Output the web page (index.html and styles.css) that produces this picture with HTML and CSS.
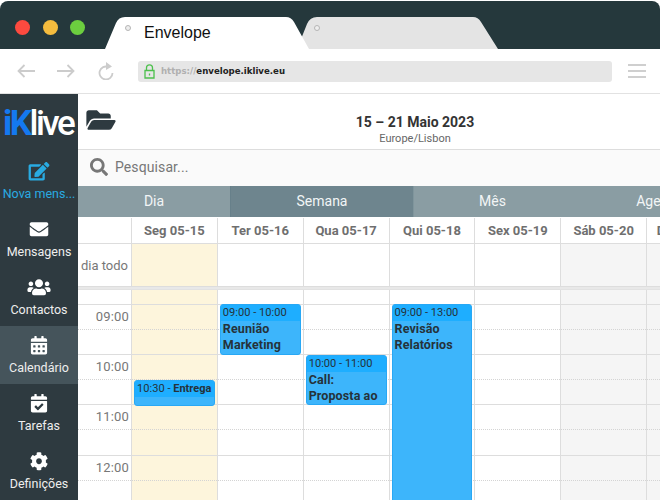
FILE: index.html
```html
<!DOCTYPE html>
<html lang="pt">
<head>
<meta charset="utf-8">
<title>Envelope</title>
<link rel="stylesheet" href="styles.css">
</head>
<body>
<div class="window">
  <header class="titlebar">
    <div class="lights"><span class="light red"></span><span class="light yellow"></span><span class="light green"></span></div>
    <div class="tabs-browser">
      <div class="btab active"><span class="bdot"></span><span>Envelope</span></div>
      <div class="btab idle"><span class="bdot"></span></div>
    </div>
  </header>
  <div class="toolbar">
    <svg class="nav-ic" viewBox="0 0 18 14"><path d="M18 7H1.500M7.500 1 1.500 7l6 6"/></svg>
    <svg class="nav-ic" viewBox="0 0 18 14"><path d="M0 7h16.500M10.500 1l6 6-6 6"/></svg>
    <svg class="reload-ic" viewBox="0 0 16 18"><path class="arc" d="M10.500 5A6.500 6.500 0 1 0 14.500 11"/><path class="head" d="M8 0l6 4.500L8 8z"/></svg>
    <div class="urlbar">
      <svg class="lock" viewBox="0 0 11 15"><path d="M2.500 6.500V3.800a3 3 0 0 1 6 0v2.700M1 6.500h9v7.500H1z"/><path d="M5.500 9.500v2"/></svg>
      <span class="url"><span class="scheme">https://</span>envelope.iklive.eu</span>
    </div>
    <div class="burger"><i></i><i></i><i></i></div>
  </div>
  <div class="app">
    <aside class="sidebar">
      <div class="logo"><span class="logo-a">iK</span><span class="logo-b">live</span></div>
      <nav class="menu">
        <a class="item new"><svg class="ic ic-edit" viewBox="0 0 576 512"><path d="M402.600 83.200l90.200 90.200c3.800 3.800 3.800 10 0 13.800L274.400 405.600l-92.800 10.300c-12.400 1.400-22.900-9.100-21.500-21.500l10.300-92.800L388.800 83.200c3.800-3.800 10-3.800 13.800 0zm162-22.900l-48.800-48.800c-15.200-15.200-39.900-15.200-55.200 0l-35.400 35.400c-3.800 3.800-3.800 10 0 13.800l90.200 90.200c3.800 3.800 10 3.800 13.800 0l35.400-35.400c15.200-15.300 15.200-40 0-55.200zM384 346.200V448H64V128h229.800c3.200 0 6.200-1.300 8.500-3.500l40-40c7.600-7.600 2.200-20.500-8.500-20.500H48C21.500 64 0 85.500 0 112v352c0 26.500 21.500 48 48 48h352c26.500 0 48-21.500 48-48V306.200c0-10.700-12.900-16-20.500-8.500l-40 40c-2.200 2.300-3.500 5.300-3.500 8.500z"/></svg><span>Nova mens...</span></a>
        <a class="item"><svg class="ic" viewBox="0 0 512 512"><path d="M502.300 190.800c3.900-3.100 9.700-.2 9.700 4.700V400c0 26.500-21.500 48-48 48H48c-26.500 0-48-21.500-48-48V195.600c0-5 5.700-7.800 9.700-4.700 22.400 17.400 52.100 39.500 154.100 113.600 21.100 15.400 56.700 47.800 92.200 47.600 35.700.3 72-32.800 92.300-47.600 102-74.100 131.600-96.300 154-113.700zM256 320c23.200.4 56.600-29.200 73.400-41.400 132.700-96.300 142.800-104.700 173.400-128.700 5.800-4.500 9.200-11.500 9.200-18.900v-19c0-26.500-21.500-48-48-48H48C21.500 64 0 85.500 0 112v19c0 7.400 3.400 14.300 9.200 18.900 30.600 23.900 40.700 32.400 173.400 128.700 16.800 12.200 50.200 41.800 73.400 41.400z"/></svg><span>Mensagens</span></a>
        <a class="item"><svg class="ic" viewBox="0 0 640 512"><path d="M96 224c35.300 0 64-28.700 64-64s-28.700-64-64-64-64 28.700-64 64 28.700 64 64 64zm448 0c35.300 0 64-28.700 64-64s-28.700-64-64-64-64 28.700-64 64 28.700 64 64 64zm32 32h-64c-17.600 0-33.500 7.100-45.100 18.600 40.300 22.100 68.900 62 75.100 109.400h66c17.700 0 32-14.300 32-32v-32c0-35.300-28.700-64-64-64zm-256 0c61.900 0 112-50.100 112-112S381.900 32 320 32 208 82.100 208 144s50.100 112 112 112zm76.800 32h-8.300c-20.800 10-43.900 16-68.500 16s-47.600-6-68.500-16h-8.300C179.600 288 128 339.600 128 403.200V432c0 26.500 21.500 48 48 48h288c26.500 0 48-21.500 48-48v-28.800c0-63.600-51.600-115.200-115.200-115.200zm-223.700-13.400C161.500 263.100 145.600 256 128 256H64c-35.300 0-64 28.700-64 64v32c0 17.700 14.300 32 32 32h65.900c6.300-47.400 34.900-87.300 75.200-109.400z"/></svg><span>Contactos</span></a>
        <a class="item current"><svg class="ic" viewBox="0 0 448 512"><path d="M0 464c0 26.500 21.500 48 48 48h352c26.500 0 48-21.500 48-48V192H0v272zm320-196c0-6.600 5.400-12 12-12h40c6.600 0 12 5.400 12 12v40c0 6.600-5.400 12-12 12h-40c-6.600 0-12-5.400-12-12v-40zm0 128c0-6.600 5.400-12 12-12h40c6.600 0 12 5.400 12 12v40c0 6.600-5.400 12-12 12h-40c-6.600 0-12-5.400-12-12v-40zM192 268c0-6.600 5.400-12 12-12h40c6.600 0 12 5.400 12 12v40c0 6.600-5.400 12-12 12h-40c-6.600 0-12-5.400-12-12v-40zm0 128c0-6.600 5.400-12 12-12h40c6.600 0 12 5.400 12 12v40c0 6.600-5.400 12-12 12h-40c-6.600 0-12-5.400-12-12v-40zM64 268c0-6.600 5.400-12 12-12h40c6.600 0 12 5.400 12 12v40c0 6.600-5.400 12-12 12H76c-6.600 0-12-5.400-12-12v-40zm0 128c0-6.600 5.400-12 12-12h40c6.600 0 12 5.400 12 12v40c0 6.600-5.400 12-12 12H76c-6.600 0-12-5.400-12-12v-40zM400 64h-48V16c0-8.800-7.200-16-16-16h-32c-8.800 0-16 7.200-16 16v48H160V16c0-8.800-7.200-16-16-16h-32c-8.800 0-16 7.200-16 16v48H48C21.500 64 0 85.500 0 112v48h448v-48c0-26.500-21.500-48-48-48z"/></svg><span>Calendário</span></a>
        <a class="item"><svg class="ic" viewBox="0 0 448 512"><path d="M436 160H12c-6.627 0-12-5.373-12-12v-36c0-26.510 21.490-48 48-48h48V12c0-6.627 5.373-12 12-12h40c6.627 0 12 5.373 12 12v52h128V12c0-6.627 5.373-12 12-12h40c6.627 0 12 5.373 12 12v52h48c26.510 0 48 21.490 48 48v36c0 6.627-5.373 12-12 12zM12 192h424c6.627 0 12 5.373 12 12v260c0 26.510-21.490 48-48 48H48c-26.510 0-48-21.490-48-48V204c0-6.627 5.373-12 12-12zm333.296 95.947l-28.169-28.398c-4.667-4.705-12.265-4.736-16.970-.068L194.120 364.665l-45.980-46.352c-4.667-4.705-12.266-4.736-16.971-.068l-28.397 28.170c-4.705 4.667-4.736 12.265-.068 16.970l82.601 83.269c4.667 4.705 12.265 4.736 16.970.068l142.953-141.805c4.705-4.667 4.736-12.265.068-16.970z"/></svg><span>Tarefas</span></a>
        <a class="item"><svg class="ic" viewBox="0 0 512 512"><path d="M487.400 315.700l-42.600-24.600c4.300-23.200 4.300-47 0-70.200l42.600-24.600c4.900-2.800 7.100-8.600 5.500-14-11.100-35.600-30-67.800-54.700-94.600-3.800-4.100-10-5.100-14.800-2.300L380.800 110c-17.900-15.400-38.500-27.300-60.800-35.100V25.800c0-5.600-3.900-10.500-9.400-11.700-36.700-8.200-74.300-7.800-109.200 0-5.500 1.200-9.400 6.100-9.400 11.700V75c-22.200 7.900-42.800 19.800-60.800 35.100L88.700 85.500c-4.900-2.800-11-1.900-14.800 2.300-24.700 26.700-43.600 58.900-54.700 94.600-1.700 5.400.6 11.200 5.500 14L67.300 221c-4.300 23.200-4.300 47 0 70.200l-42.600 24.600c-4.900 2.800-7.100 8.600-5.500 14 11.100 35.600 30 67.800 54.700 94.600 3.800 4.100 10 5.100 14.800 2.300l42.600-24.600c17.900 15.400 38.500 27.300 60.800 35.100v49.200c0 5.600 3.900 10.500 9.400 11.700 36.700 8.200 74.300 7.800 109.200 0 5.500-1.200 9.400-6.100 9.400-11.700v-49.200c22.200-7.900 42.800-19.800 60.800-35.100l42.600 24.600c4.900 2.800 11 1.900 14.800-2.300 24.700-26.700 43.600-58.900 54.700-94.600 1.500-5.500-.7-11.300-5.600-14.100zM256 336c-44.100 0-80-35.900-80-80s35.900-80 80-80 80 35.900 80 80-35.900 80-80 80z"/></svg><span>Definições</span></a>
      </nav>
    </aside>
    <main class="main">
      <div class="cal-head">
        <svg class="folder" viewBox="0 0 576 512"><path d="M572.694 292.093L500.270 416.248A63.997 63.997 0 0 1 444.989 448H45.025c-18.523 0-30.064-20.093-20.731-36.093l72.424-124.155A64 64 0 0 1 152 256h399.964c18.523 0 30.064 20.093 20.730 36.093zM152 224h328v-48c0-26.510-21.490-48-48-48H272l-64-64H48C21.490 64 0 85.490 0 112v278.046l69.077-118.418C86.214 242.250 117.989 224 152 224z"/></svg>
        <div class="cal-title"><strong>15 – 21 Maio 2023</strong><span>Europe/Lisbon</span></div>
      </div>
      <div class="search">
        <svg class="search-ic" viewBox="0 0 512 512"><path d="M505 442.700L405.300 343c-4.500-4.500-10.600-7-17-7H372c27.600-35.300 44-79.700 44-128C416 93.100 322.900 0 208 0S0 93.100 0 208s93.100 208 208 208c48.300 0 92.700-16.400 128-44v16.300c0 6.400 2.500 12.500 7 17l99.700 99.700c9.400 9.400 24.600 9.400 33.900 0l28.300-28.300c9.400-9.400 9.400-24.600.1-34zM208 336c-70.700 0-128-57.200-128-128 0-70.700 57.200-128 128-128 70.700 0 128 57.200 128 128 0 70.700-57.200 128-128 128z"/></svg>
        <span>Pesquisar...</span>
      </div>
      <div class="views">
        <div class="view v-dia">Dia</div>
        <div class="view v-sem">Semana</div>
        <div class="view v-mes">Mês</div>
        <div class="view v-age">Agenda</div>
      </div>
      <div class="grid-row head-row">
        <div class="cell gutter"></div>
        <div class="cell">Seg 05-15</div><div class="cell">Ter 05-16</div><div class="cell">Qua 05-17</div><div class="cell">Qui 05-18</div><div class="cell">Sex 05-19</div><div class="cell">Sáb 05-20</div><div class="cell">Dom 05-21</div>
      </div>
      <div class="grid-row allday-row">
        <div class="cell gutter">dia todo</div>
        <div class="cell today"></div><div class="cell"></div><div class="cell"></div><div class="cell"></div><div class="cell"></div><div class="cell off"></div><div class="cell off"></div>
      </div>
      <div class="sep"></div>
      <div class="grid-row time-grid">
        <div class="day tcol">
          <div class="top"></div>
          <div class="slot"><b>09:00</b></div><div class="slot half"></div>
          <div class="slot"><b>10:00</b></div><div class="slot half"></div>
          <div class="slot"><b>11:00</b></div><div class="slot half"></div>
          <div class="slot"><b>12:00</b></div><div class="slot half"></div>
        </div>
        <div class="day today">
          <div class="top"></div><div class="slot"></div><div class="slot half"></div><div class="slot"></div><div class="slot half"></div><div class="slot"></div><div class="slot half"></div><div class="slot"></div><div class="slot half"></div>
          <div class="event ev-seg"><div class="ev-time">10:30 - <strong>Entrega</strong></div></div>
        </div>
        <div class="day">
          <div class="top"></div><div class="slot"></div><div class="slot half"></div><div class="slot"></div><div class="slot half"></div><div class="slot"></div><div class="slot half"></div><div class="slot"></div><div class="slot half"></div>
          <div class="event ev-ter"><div class="ev-time">09:00 - 10:00</div><div class="ev-title">Reunião Marketing</div></div>
        </div>
        <div class="day">
          <div class="top"></div><div class="slot"></div><div class="slot half"></div><div class="slot"></div><div class="slot half"></div><div class="slot"></div><div class="slot half"></div><div class="slot"></div><div class="slot half"></div>
          <div class="event ev-qua"><div class="ev-time">10:00 - 11:00</div><div class="ev-title">Call:<br>Proposta ao cliente</div></div>
        </div>
        <div class="day">
          <div class="top"></div><div class="slot"></div><div class="slot half"></div><div class="slot"></div><div class="slot half"></div><div class="slot"></div><div class="slot half"></div><div class="slot"></div><div class="slot half"></div>
          <div class="event ev-qui"><div class="ev-time">09:00 - 13:00</div><div class="ev-title">Revisão<br>Relatórios</div></div>
        </div>
        <div class="day">
          <div class="top"></div><div class="slot"></div><div class="slot half"></div><div class="slot"></div><div class="slot half"></div><div class="slot"></div><div class="slot half"></div><div class="slot"></div><div class="slot half"></div>
        </div>
        <div class="day off">
          <div class="top"></div><div class="slot"></div><div class="slot half"></div><div class="slot"></div><div class="slot half"></div><div class="slot"></div><div class="slot half"></div><div class="slot"></div><div class="slot half"></div>
        </div>
        <div class="day off">
          <div class="top"></div><div class="slot"></div><div class="slot half"></div><div class="slot"></div><div class="slot half"></div><div class="slot"></div><div class="slot half"></div><div class="slot"></div><div class="slot half"></div>
        </div>
      </div>
    </main>
  </div>
</div>
</body>
</html>
```
FILE: styles.css
```css
* { box-sizing: border-box; }
html, body { margin: 0; padding: 0; background: #fff; }
body { width: 660px; height: 500px; overflow: hidden; font-family: Roboto, sans-serif; }
.window { width: 660px; height: 500px; display: flex; flex-direction: column; overflow: hidden; }

/* browser chrome */
.titlebar { height: 48px; margin-top: 1px; flex: none; background: #25383c; border-radius: 8px 8px 0 0; display: flex; position: relative; }
.lights { display: flex; gap: 12.500px; padding: 18.500px 0 0 15px; width: 105px; }
.light { width: 15px; height: 15px; border-radius: 50%; }
.red { background: #fc4a3f; }
.yellow { background: #f5bc3e; }
.green { background: #6cce3f; }
.tabs-browser { display: flex; align-items: flex-end; height: 48px; }
.btab { height: 32px; position: relative; display: flex; align-items: center; }
.btab.active { width: 204px; background: #fff; z-index: 2; padding: 0 0 0 39px; font: 16px "Liberation Sans", Arial, sans-serif; color: #111;
  clip-path: path("M0 32 L11 6 Q13.500 0 20 0 H181 Q186 0 189 5 L204 32 Z"); }
.btab.idle { width: 206px; margin-left: -17px; background: #e4e4e4; z-index: 1;
  clip-path: path("M5 32 L15 7 Q18 0 25 0 H181 Q186 0 189 5 L206 32 Z"); }
.bdot { position: absolute; top: 8px; left: 20px; width: 6px; height: 6px; border-radius: 50%; border: 1.500px solid #b5b5b5; background: #eee; }
.btab.idle .bdot { left: 22px; }

.toolbar { height: 45px; flex: none; background: #fff; border-bottom: 1px solid #e2e2e2; display: flex; align-items: center; position: relative; padding: 0 0 0 17px; }
.nav-ic { width: 18px; height: 14px; fill: none; stroke: #ccc; stroke-width: 1.800; margin-right: 22px; }
.reload-ic { width: 16px; height: 18px; margin: -1px 0 0 1px; }
.reload-ic .arc { fill: none; stroke: #ccc; stroke-width: 1.800; }
.reload-ic .head { fill: #ccc; }
.urlbar { width: 474px; height: 21px; margin-left: 24px; background: #e6e6e6; border-radius: 3px; display: flex; align-items: center; padding-left: 6px; }
.lock { width: 11px; height: 15px; fill: none; stroke: #4cc04c; stroke-width: 1.300; }
.url { margin-left: 6px; font: bold 8.600px "DejaVu Sans", Verdana, sans-serif; color: #222; }
.scheme { color: #b0b0b0; }
.burger { margin-left: 16px; width: 18px; display: flex; flex-direction: column; gap: 4px; }
.burger i { display: block; height: 2px; background: #cfcfcf; }

/* app */
.app { flex: 1; min-height: 0; display: flex; background: #fff; }
.sidebar { width: 78px; flex: none; background: #2e3a40; }
.logo { height: 58px; padding: 11px 0 0 3px; font: bold 35px/38px Roboto, sans-serif; letter-spacing: -2.500px; white-space: nowrap; overflow: hidden; }
.logo-a { color: #1479f0; }
.logo-b { color: #fff; font-weight: 500; }
.menu { display: flex; flex-direction: column; }
.item { height: 58px; display: flex; flex-direction: column; align-items: center; padding-top: 10px; gap: 5.500px; color: #eee; font-size: 12.500px; line-height: 16px; white-space: nowrap; fill: #fff; }
.item.new { color: #29abe2; fill: #29abe2; }
.item.current { background: #45545b; }
.ic { height: 18.500px; width: 24px; flex: none; }

.main { flex: 1; min-width: 0; overflow: hidden; }
.cal-head { height: 56px; border-bottom: 1px solid #ddd; background: #fff; display: flex; align-items: flex-start; position: relative; }
.folder { width: 30px; height: 26px; margin: 13px 0 0 7.500px; fill: #2e3a40; flex: none; }
.cal-title { width: 567px; margin: 20px 0 0 16px; display: flex; flex-direction: column; align-items: center; color: #333; flex: none; }
.cal-title strong { font-size: 14px; line-height: 17px; color: #333; }
.cal-title span { font-size: 11px; line-height: 15px; color: #666; }
.search { height: 36px; background: #fafafa; display: flex; align-items: center; padding: 0 0 2px 12px; color: #777; font-size: 14px; letter-spacing: .1px; }
.search-ic { width: 18px; height: 18px; fill: #777; margin-right: 7px; }
.views { height: 32px; display: flex; border-bottom: 1px solid #fff; color: #f2f5f6; font-size: 14px; line-height: 31px; text-align: center; white-space: nowrap; }
.view { flex: none; background: #8a9da3; }
.v-dia { width: 152px; }
.v-sem { width: 183px; background: #6e858e; border-left: 1px solid #67808a; }
.v-mes { width: 158px; border-left: 1px solid #7f959c; }
.v-age { width: 178px; }

.grid-row { display: grid; grid-template-columns: 53px repeat(7, 85.850px); width: 700px; }
.head-row { height: 26px; border-bottom: 1px solid #ddd; }
.cell { border-left: 1px solid #ddd; font-weight: 700; font-size: 13px; line-height: 25px; color: #6f6f6f; text-align: center; white-space: nowrap; overflow: hidden; }
.gutter { border-left: 0; font-weight: 400; text-align: right; padding-right: 3px; color: #777; }
.allday-row { height: 42px; }
.allday-row .gutter { line-height: 44px; font-size: 13px; }
.today { background: #fdf5dc; }
.off { background: #f5f5f5; }
.sep { height: 4px; width: 700px; background: #e8e8e8; border-top: 1px solid #ddd; border-bottom: 1px solid #e2e2e2; }

.time-grid { height: 213px; }
.day { border-left: 1px solid #ddd; position: relative; }
.tcol { border-left: 0; }
.top { height: 13.500px; }
.slot { height: 25.200px; border-top: 1px solid #ddd; }
.slot.half { border-top: 1px dotted #d4d4d4; }
.slot b { display: block; font-weight: 400; font-size: 13px; line-height: 24px; text-align: right; padding-right: 2px; color: #777; letter-spacing: .2px; }

.event { position: absolute; left: 2px; width: 81px; background: #3db5fb; border: 1px solid #28a8f5; border-radius: 3px; overflow: hidden; color: #25323a; }
.ev-time { background: #1eaeff; height: 16px; font-size: 11.100px; line-height: 15px; padding-left: 2px; white-space: nowrap; }
.ev-time strong { font-size: 11px; font-weight: 700; }
.ev-title { font-weight: 700; font-size: 12.500px; line-height: 16.500px; padding-left: 2px; letter-spacing: .1px; }
.ev-seg { top: 89.500px; height: 26px; }
.ev-ter { top: 13.500px; height: 51px; }
.ev-qua { top: 64.500px; height: 50.500px; }
.ev-qui { top: 13.500px; height: 240px; width: 80px; left: 2px; }
```
